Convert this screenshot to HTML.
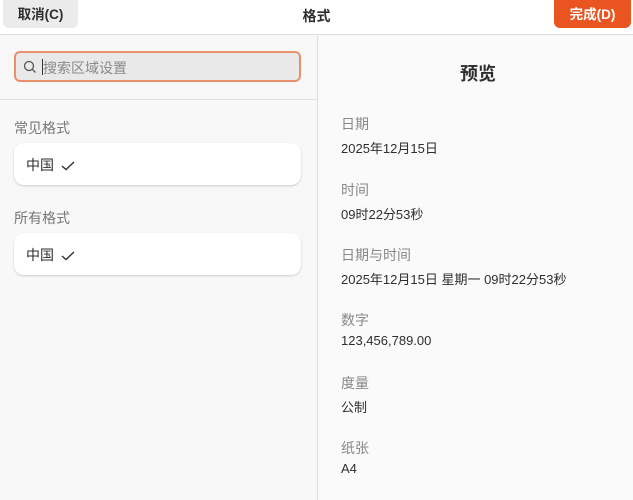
<!DOCTYPE html>
<html><head><meta charset="utf-8"><style>
*{margin:0;padding:0;box-sizing:border-box}
body{width:633px;height:500px;overflow:hidden;background:#fafafa;font-family:"Liberation Sans","Noto Sans CJK SC",sans-serif;color:#2e2e2e;position:relative}
.hdr{position:absolute;left:0;top:0;width:633px;height:35px;background:#fff;border-bottom:1px solid #dcdcdc}
.btn{position:absolute;top:0;height:28px;border-radius:0 0 6px 6px;font-size:13.5px;font-weight:bold;line-height:29px;text-align:center}
.title{position:absolute;left:0;width:633px;top:6px;text-align:center;font-weight:bold;font-size:14px}
.left{position:absolute;left:0;top:36px;width:318px;height:464px;background:#f8f8f8;border-right:1px solid #dedede}
.search{position:absolute;left:14px;top:51px;width:287px;height:31px;border:2px solid #e8906c;border-radius:6px;background:#e9e9e9}
.search span{position:absolute;left:26px;top:5px;font-size:14px;color:#8a8a8a}
.sep{position:absolute;left:0;top:99px;width:318px;height:1px;background:#dedede}
.sec{position:absolute;left:14px;font-size:14px;color:#777}
.card{position:absolute;left:14px;width:287px;height:42px;background:#fff;border-radius:10px;box-shadow:0 1px 2px rgba(0,0,0,.18);font-size:14px;padding:12px 0 0 12px}
.lab{position:absolute;left:341px;font-size:14px;color:#888}
.val{position:absolute;left:341px;font-size:13px;color:#2e2e2e}
</style></head><body>
<div class="hdr"></div>
<div class="btn" style="left:3px;width:75px;background:#ebebeb;color:#2e2e2e">取消(C)</div>
<div class="title">格式</div>
<div class="btn" style="left:554px;width:77px;background:#e95420;color:#fff">完成(D)</div>
<div class="left"></div>
<div class="search"><svg style="position:absolute;left:7px;top:7px" width="14" height="14" viewBox="0 0 14 14"><circle cx="6" cy="6" r="4.5" fill="none" stroke="#555" stroke-width="1.3"/><path d="M9.3 9.3L12.5 12.5" stroke="#555" stroke-width="1.3"/></svg><div style="position:absolute;left:26px;top:6px;width:1px;height:16px;background:#333"></div><span style="left:27px">搜索区域设置</span></div>
<div class="sep"></div>
<div class="sec" style="top:118px">常见格式</div>
<div class="card" style="top:143px">中国<svg style="margin-left:7px;vertical-align:middle" width="14" height="10" viewBox="0 0 14 10"><path d="M1 5L5 8.5L13 1" fill="none" stroke="#333" stroke-width="1.4"/></svg></div>
<div class="sec" style="top:208px">所有格式</div>
<div class="card" style="top:233px">中国<svg style="margin-left:7px;vertical-align:middle" width="14" height="10" viewBox="0 0 14 10"><path d="M1 5L5 8.5L13 1" fill="none" stroke="#333" stroke-width="1.4"/></svg></div>
<div style="position:absolute;left:321px;width:314px;top:60px;text-align:center;font-size:18px;font-weight:bold">预览</div>
<div class="lab" style="top:114px">日期</div><div class="val" style="top:138px">2025年12月15日</div>
<div class="lab" style="top:180px">时间</div><div class="val" style="top:204px">09时22分53秒</div>
<div class="lab" style="top:245px">日期与时间</div><div class="val" style="top:269px">2025年12月15日 星期一 09时22分53秒</div>
<div class="lab" style="top:310px">数字</div><div class="val" style="top:333px">123,456,789.00</div>
<div class="lab" style="top:373px">度量</div><div class="val" style="top:397px">公制</div>
<div class="lab" style="top:438px">纸张</div><div class="val" style="top:461px">A4</div>
</body></html>
